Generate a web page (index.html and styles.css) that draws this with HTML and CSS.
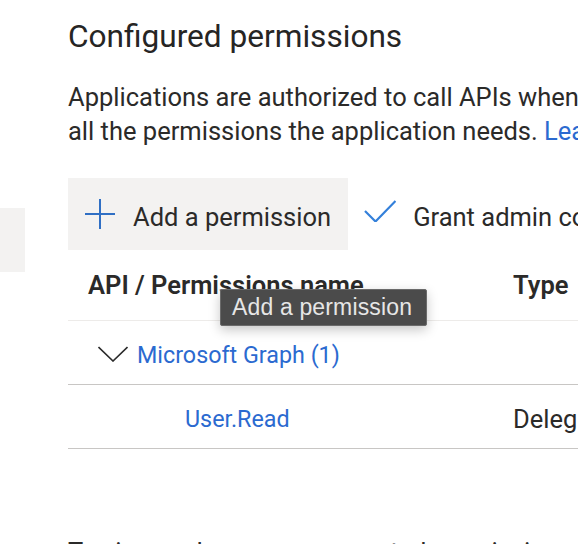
FILE: index.html
```html
<!DOCTYPE html>
<html lang="en">
<head>
<meta charset="utf-8">
<title>Configured permissions</title>
<link rel="stylesheet" href="styles.css">
</head>
<body>
<div class="page">
  <aside class="side">
    <div class="side-block"></div>
  </aside>
  <main class="main">
    <h2 class="title">Configured permissions</h2>
    <p class="desc">
      <span class="line">Applications are authorized to call APIs when they are granted permissions by users/admins as part of the consent process. The list of configured permissions should include</span>
      <span class="line">all the permissions the application needs. <a class="link" href="#">Learn more about permissions and consent</a></span>
    </p>

    <div class="commandbar">
      <button class="cmd cmd-primary" type="button">
        <svg class="cmd-icon" width="30" height="30" viewBox="0 0 30 30" aria-hidden="true">
          <path d="M15 0 V30 M0 15 H30" stroke="#2f6fc4" stroke-width="2" fill="none"/>
        </svg>
        <span class="cmd-label">Add a permission</span>
      </button>
      <button class="cmd cmd-plain" type="button">
        <svg class="cmd-icon check" width="32" height="22" viewBox="0 0 32 22" aria-hidden="true">
          <path d="M1 11 L11.5 21.5 L31.5 1" stroke="#3480da" stroke-width="2.2" fill="none"/>
        </svg>
        <span class="cmd-label">Grant admin consent for Default Directory</span>
      </button>
    </div>

    <div class="grid">
      <div class="row row-head">
        <div class="cell c1">API / Permissions name</div>
        <div class="cell c2">Type</div>
        <div class="cell c3">Description</div>
        <div class="cell c4">Admin consent required</div>
      </div>
      <div class="row row-group">
        <div class="cell c-group">
          <svg class="chev" width="30" height="16" viewBox="0 0 30 16" aria-hidden="true">
            <path d="M0.5 1 L15 15 L29.5 1" stroke="#2b2b2b" stroke-width="1.6" fill="none"/>
          </svg>
          <a class="link" href="#">Microsoft Graph (1)</a>
        </div>
      </div>
      <div class="row row-item">
        <div class="cell c1 c-indent"><a class="link" href="#">User.Read</a></div>
        <div class="cell c2 c-text">Delegated</div>
        <div class="cell c3 c-text">Sign in and read user profile</div>
        <div class="cell c4 c-text">No</div>
      </div>
    </div>

    <p class="note">To view and manage consented permissions for individual apps, as well as your tenant's consent settings, try <a class="link" href="#">Enterprise applications</a>.</p>
  </main>
</div>

<div class="tooltip" role="tooltip">Add a permission</div>
</body>
</html>
```
FILE: styles.css
```css
html, body {
  margin: 0;
  padding: 0;
  overflow: hidden;
  background: #ffffff;
}

body {
  font-family: Roboto, "Liberation Sans", sans-serif;
  color: #2b2a29;
  position: relative;
  width: 578px;
  height: 544px;
}

.page {
  display: flex;
  align-items: flex-start;
}

.side {
  flex: none;
  width: 25px;
}

.side-block {
  margin-top: 208px;
  height: 64px;
  background: #f3f2f1;
}

.main {
  flex: none;
  margin-left: 43px;
  width: 1400px;
}

.title {
  margin: 17px 0 0;
  font-size: 31.6px;
  line-height: 40px;
  font-weight: 400;
  color: #262524;
  white-space: nowrap;
}

.desc {
  margin: 23px 0 0;
  font-size: 25.5px;
  line-height: 34px;
  white-space: nowrap;
}

.line {
  display: block;
}

.link {
  color: #2b6ad0;
  text-decoration: none;
}

.commandbar {
  margin-top: 30px;
  display: flex;
  align-items: stretch;
  height: 72px;
}

.cmd {
  display: flex;
  align-items: center;
  height: 72px;
  border: 0;
  margin: 0;
  background: transparent;
  font: inherit;
  font-size: 25.5px;
  line-height: 34px;
  color: #2b2a29;
  cursor: pointer;
  white-space: nowrap;
}

.cmd-primary {
  background: #f3f2f1;
  padding: 0 17px;
  gap: 18px;
}

.cmd-plain {
  padding: 0 0 0 16px;
  gap: 17px;
}

.cmd-icon {
  flex: none;
  display: block;
}

.check {
  margin-top: -6px;
}

.cmd-label {
  margin-top: 6px;
}

.grid {
  display: flex;
  flex-direction: column;
}

.row {
  display: grid;
  grid-template-columns: 445px 260px 420px 300px;
  white-space: nowrap;
}

.row-head {
  font-size: 25.5px;
  line-height: 34px;
  font-weight: 600;
  padding: 18px 0;
  border-bottom: 1px solid #edebe9;
}

.row-head .c1 {
  padding-left: 20px;
}

.row-group,
.row-item {
  font-size: 23.3px;
  line-height: 30px;
  padding: 19px 0 14px;
  border-bottom: 1px solid #c8c6c4;
}

.row-group {
  display: flex;
}

.c-group {
  display: flex;
  align-items: center;
  gap: 9px;
  padding-left: 30px;
}

.chev {
  display: block;
  flex: none;
  margin-top: -2px;
}

.c-indent {
  padding-left: 117px;
}

.c-text {
  font-size: 25.5px;
}

.note {
  margin: 86px 0 0;
  font-size: 25.5px;
  line-height: 34px;
  white-space: nowrap;
}

.tooltip {
  position: absolute;
  left: 220px;
  top: 289px;
  width: 207px;
  height: 37px;
  box-sizing: border-box;
  padding: 0 0 0 11px;
  background: #4b4b4b;
  border: 1px solid #6b6b6b;
  border-radius: 2px;
  color: #e6e6e6;
  font-family: "Liberation Sans", Arial, sans-serif;
  font-size: 23px;
  letter-spacing: 0.15px;
  line-height: 35px;
  white-space: nowrap;
  box-shadow: 0 4px 12px rgba(0, 0, 0, 0.22);
}
```
